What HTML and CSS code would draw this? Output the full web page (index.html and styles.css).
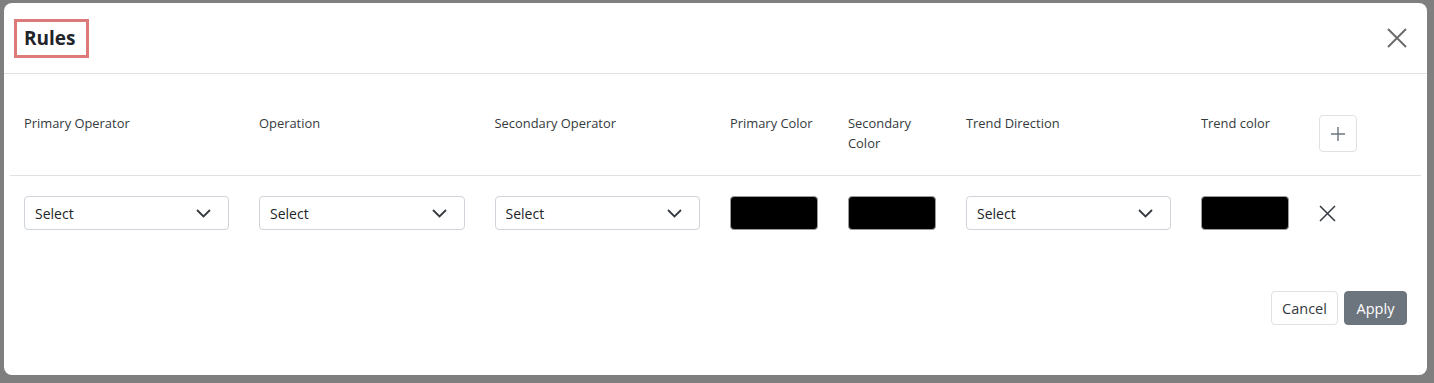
FILE: index.html
```html
<html>
<head>
	<title>Rules</title>
	<link rel="stylesheet" href="styles.css">
</head>
<body>
<div class="modal">
	<div class="modal-header">
		<div class="title-box"><h5 class="modal-title">Rules</h5></div>
		<button class="btn-close" aria-label="Close">
			<svg width="20" height="20" viewBox="0 0 20 20"><path d="M1 1L19 19M19 1L1 19" stroke="#6c6c6c" stroke-width="2" fill="none"/></svg>
		</button>
	</div>
	<div class="modal-body">
		<div class="rule-row rule-head">
			<div class="col-label">Primary Operator</div>
			<div class="col-label">Operation</div>
			<div class="col-label">Secondary Operator</div>
			<div class="col-label">Primary Color</div>
			<div class="col-label">Secondary Color</div>
			<div class="col-label">Trend Direction</div>
			<div class="col-label">Trend color</div>
			<button class="btn-add">
				<svg width="14" height="14" viewBox="0 0 14 14"><path d="M7 0V14M0 7H14" stroke="#6c757d" stroke-width="1.4" fill="none"/></svg>
			</button>
		</div>
		<div class="rule-row rule-item">
			<div class="select">Select<svg class="chev" width="15" height="9" viewBox="0 0 15 9"><path d="M1 1L7.5 7.5L14 1" stroke="#343a40" stroke-width="1.8" fill="none"/></svg></div>
			<div class="select">Select<svg class="chev" width="15" height="9" viewBox="0 0 15 9"><path d="M1 1L7.5 7.5L14 1" stroke="#343a40" stroke-width="1.8" fill="none"/></svg></div>
			<div class="select">Select<svg class="chev" width="15" height="9" viewBox="0 0 15 9"><path d="M1 1L7.5 7.5L14 1" stroke="#343a40" stroke-width="1.8" fill="none"/></svg></div>
			<div class="swatch"></div>
			<div class="swatch"></div>
			<div class="select">Select<svg class="chev" width="15" height="9" viewBox="0 0 15 9"><path d="M1 1L7.5 7.5L14 1" stroke="#343a40" stroke-width="1.8" fill="none"/></svg></div>
			<div class="swatch"></div>
			<button class="btn-remove">
				<svg width="17" height="17" viewBox="0 0 17 17"><path d="M1 1L16 16M16 1L1 16" stroke="#343a40" stroke-width="1.5" fill="none"/></svg>
			</button>
		</div>
	</div>
	<div class="modal-footer">
		<button class="btn btn-light">Cancel</button>
		<button class="btn btn-secondary">Apply</button>
	</div>
</div>
</body>
</html>
```
FILE: styles.css
```css
body, html {
	height: 100%;
	margin: 0;
}
body {
	background: #7f7f7f;
	font-family: "Open Sans", Lato, sans-serif;
	color: #212529;
	overflow: hidden;
}
button {
	font-family: inherit;
	cursor: pointer;
}

.modal {
	margin: 3px 0 0 4px;
	width: 1423px;
	height: 372px;
	background: #fff;
	border-radius: 8px;
	box-sizing: border-box;
}

.modal-header {
	height: 70px;
	border-bottom: 1px solid #dee2e6;
	padding: 0 20px 0 10px;
	display: flex;
	align-items: center;
	justify-content: space-between;
}
.title-box {
	border: 3px solid #dc7a7a;
	height: 33px;
	width: 62px;
	padding: 0 0 0 7px;
	box-sizing: content-box;
	display: flex;
	align-items: center;
}
.modal-title {
	margin: 0;
	font-size: 19px;
	font-weight: 700;
	color: #212529;
}
.btn-close {
	border: none;
	background: none;
	padding: 0;
	width: 20px;
	height: 20px;
	display: flex;
}

.modal-body {
	padding: 0 6px;
}
.rule-row {
	display: grid;
	grid-template-columns: 205px 205.5px 205.5px 88px 88px 205px 88px 38px;
	column-gap: 30px;
	padding: 0 14px;
}
.rule-head {
	padding-top: 39px;
	padding-bottom: 22px;
	height: 40px;
	border-bottom: 1px solid #dee2e6;
	align-items: start;
}
.col-label {
	font-size: 12.9px;
	line-height: 20px;
	color: #343a40;
}
.btn-add {
	margin-top: 2px;
	width: 38px;
	height: 37px;
	border: 1px solid #dee2e6;
	border-radius: 4px;
	background: #fff;
	display: flex;
	align-items: center;
	justify-content: center;
	padding: 0;
}

.rule-item {
	padding-top: 20px;
	align-items: center;
}
.select {
	height: 34px;
	box-sizing: border-box;
	border: 1px solid #ced4da;
	border-radius: 4px;
	padding: 0 17px 0 10px;
	font-size: 14px;
	color: #212529;
	display: flex;
	align-items: center;
	justify-content: space-between;
}
.swatch {
	height: 34px;
	box-sizing: border-box;
	background: #000;
	border: 1px solid #9a9a9a;
	border-radius: 4px;
}
.btn-remove {
	border: none;
	background: none;
	padding: 0;
	width: 17px;
	height: 17px;
	display: flex;
}

.modal-footer {
	display: flex;
	justify-content: flex-end;
	gap: 6px;
	padding: 61px 20px 0 0;
}
.btn {
	height: 34px;
	border-radius: 4px;
	font-size: 14.5px;
	padding: 0 8px;
}
.btn-light {
	background: #fff;
	border: 1px solid #dee2e6;
	color: #343a40;
	width: 67px;
}
.btn-secondary {
	background: #6c757d;
	border: 1px solid #6c757d;
	color: #fff;
	width: 63px;
}
```
